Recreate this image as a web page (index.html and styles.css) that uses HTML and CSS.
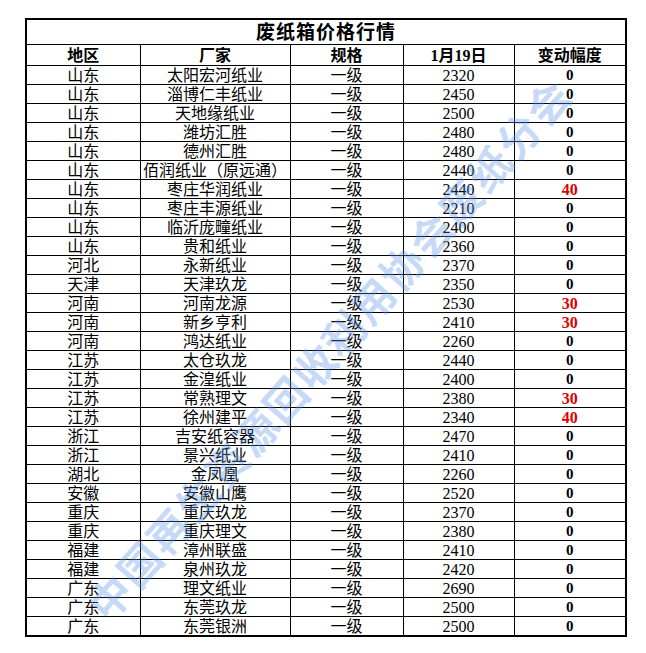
FILE: index.html
```html
<!DOCTYPE html>
<html lang="zh-CN">
<head>
<meta charset="utf-8">
<title>废纸箱价格行情</title>
<link rel="stylesheet" href="styles.css">
</head>
<body>
<div class="page">
<table class="sheet">
<colgroup><col class="c1"><col class="c2"><col class="c3"><col class="c4"><col class="c5"></colgroup>
<thead>
<tr class="title"><th colspan="5">废纸箱价格行情</th></tr>
<tr class="head"><th>地区</th><th>厂家</th><th>规格</th><th>1月19日</th><th>变动幅度</th></tr>
</thead>
<tbody>
<tr><td>山东</td><td>太阳宏河纸业</td><td>一级</td><td class="num">2320</td><td class="chg">0</td></tr>
<tr><td>山东</td><td>淄博仁丰纸业</td><td>一级</td><td class="num">2450</td><td class="chg">0</td></tr>
<tr><td>山东</td><td>天地缘纸业</td><td>一级</td><td class="num">2500</td><td class="chg">0</td></tr>
<tr><td>山东</td><td>潍坊汇胜</td><td>一级</td><td class="num">2480</td><td class="chg">0</td></tr>
<tr><td>山东</td><td>德州汇胜</td><td>一级</td><td class="num">2480</td><td class="chg">0</td></tr>
<tr><td>山东</td><td>佰润纸业（原远通）</td><td>一级</td><td class="num">2440</td><td class="chg">0</td></tr>
<tr><td>山东</td><td>枣庄华润纸业</td><td>一级</td><td class="num">2440</td><td class="chg up">40</td></tr>
<tr><td>山东</td><td>枣庄丰源纸业</td><td>一级</td><td class="num">2210</td><td class="chg">0</td></tr>
<tr><td>山东</td><td>临沂庞疃纸业</td><td>一级</td><td class="num">2400</td><td class="chg">0</td></tr>
<tr><td>山东</td><td>贵和纸业</td><td>一级</td><td class="num">2360</td><td class="chg">0</td></tr>
<tr><td>河北</td><td>永新纸业</td><td>一级</td><td class="num">2370</td><td class="chg">0</td></tr>
<tr><td>天津</td><td>天津玖龙</td><td>一级</td><td class="num">2350</td><td class="chg">0</td></tr>
<tr><td>河南</td><td>河南龙源</td><td>一级</td><td class="num">2530</td><td class="chg up">30</td></tr>
<tr><td>河南</td><td>新乡亨利</td><td>一级</td><td class="num">2410</td><td class="chg up">30</td></tr>
<tr><td>河南</td><td>鸿达纸业</td><td>一级</td><td class="num">2260</td><td class="chg">0</td></tr>
<tr><td>江苏</td><td>太仓玖龙</td><td>一级</td><td class="num">2440</td><td class="chg">0</td></tr>
<tr><td>江苏</td><td>金湟纸业</td><td>一级</td><td class="num">2400</td><td class="chg">0</td></tr>
<tr><td>江苏</td><td>常熟理文</td><td>一级</td><td class="num">2380</td><td class="chg up">30</td></tr>
<tr><td>江苏</td><td>徐州建平</td><td>一级</td><td class="num">2340</td><td class="chg up">40</td></tr>
<tr><td>浙江</td><td>吉安纸容器</td><td>一级</td><td class="num">2470</td><td class="chg">0</td></tr>
<tr><td>浙江</td><td>景兴纸业</td><td>一级</td><td class="num">2410</td><td class="chg">0</td></tr>
<tr><td>湖北</td><td>金凤凰</td><td>一级</td><td class="num">2260</td><td class="chg">0</td></tr>
<tr><td>安徽</td><td>安徽山鹰</td><td>一级</td><td class="num">2520</td><td class="chg">0</td></tr>
<tr><td>重庆</td><td>重庆玖龙</td><td>一级</td><td class="num">2370</td><td class="chg">0</td></tr>
<tr><td>重庆</td><td>重庆理文</td><td>一级</td><td class="num">2380</td><td class="chg">0</td></tr>
<tr><td>福建</td><td>漳州联盛</td><td>一级</td><td class="num">2410</td><td class="chg">0</td></tr>
<tr><td>福建</td><td>泉州玖龙</td><td>一级</td><td class="num">2420</td><td class="chg">0</td></tr>
<tr><td>广东</td><td>理文纸业</td><td>一级</td><td class="num">2690</td><td class="chg">0</td></tr>
<tr><td>广东</td><td>东莞玖龙</td><td>一级</td><td class="num">2500</td><td class="chg">0</td></tr>
<tr><td>广东</td><td>东莞银洲</td><td>一级</td><td class="num">2500</td><td class="chg">0</td></tr>
</tbody>
</table>
<div class="watermark">中国再生资源回收利用协会废纸分会</div>
</div>
</body>
</html>
```
FILE: styles.css
```css
html, body {
  margin: 0;
  padding: 0;
  background: #fff;
}
.page {
  position: relative;
  width: 646px;
  height: 653px;
  padding: 18px 0 0 25px;
  box-sizing: border-box;
}
.sheet {
  border-collapse: collapse;
  table-layout: fixed;
  width: 600px;
  border: 2px solid #000;
  font-family: "Liberation Serif", "Noto Sans CJK SC", serif;
  color: #000;
}
.c1 { width: 114px; }
.c2 { width: 150px; }
.c3 { width: 113px; }
.c4 { width: 111px; }
.c5 { width: 112px; }
.sheet th, .sheet td {
  border: 1px solid #000;
  padding: 0;
  text-align: center;
  vertical-align: bottom;
  white-space: nowrap;
  overflow: hidden;
}
.sheet td {
  font-size: 16px;
  line-height: 17px;
  height: 18px;
}
.sheet tbody tr {
  height: 19px;
}
.title th {
  height: 24px;
  font-size: 19px;
  line-height: 22px;
  font-weight: bold;
  letter-spacing: 1px;
}
.head th {
  height: 20px;
  font-size: 16px;
  line-height: 18px;
  font-weight: bold;
}
.sheet td.num {
  font-size: 16px;
}
.sheet td.chg {
  font-size: 15px;
  font-weight: bold;
}
.sheet td.up {
  color: #e00000;
  font-size: 16px;
}
.watermark {
  position: absolute;
  left: 328px;
  top: 348px;
  transform: translate(-50%, -50%) rotate(-48.5deg);
  font-family: "Noto Sans CJK SC", sans-serif;
  font-weight: bold;
  font-size: 42px;
  letter-spacing: 2px;
  white-space: nowrap;
  color: rgba(90, 150, 235, 0.36);
  pointer-events: none;
}
```
